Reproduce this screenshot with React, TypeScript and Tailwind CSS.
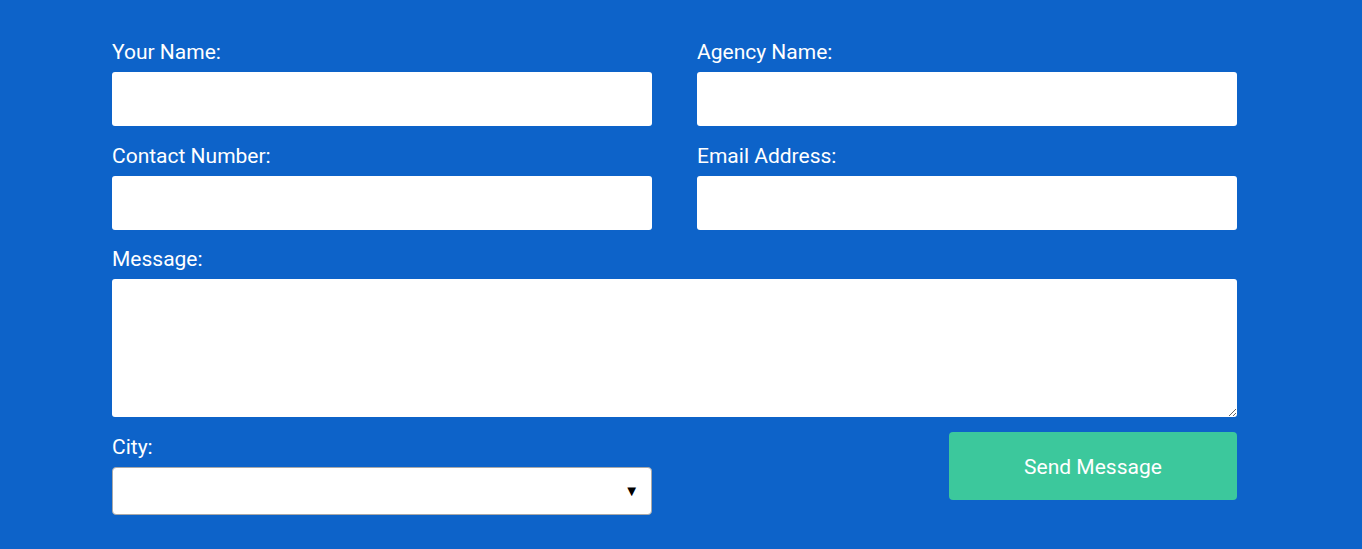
import React from "react";

function Field({ label }: { label: string }) {
  return (
    <div className="flex flex-col">
      <label className="h-[25px] leading-[27px] mb-2 text-[21px] text-white">{label}</label>
      <input type="text" className="h-[54px] w-full rounded-[3px] bg-white border-0 outline-none px-3 text-base" />
    </div>
  );
}

export default function App() {
  return (
    <div className="min-h-screen w-full bg-[#0d63c9] font-['Roboto',sans-serif]">
      <form className="ml-[112px] w-[1125px] pt-[39px] flex flex-col" onSubmit={(e) => e.preventDefault()}>
        <div className="grid grid-cols-2 gap-x-[45px]">
          <Field label="Your Name:" />
          <Field label="Agency Name:" />
        </div>
        <div className="grid grid-cols-2 gap-x-[45px] mt-[17px]">
          <Field label="Contact Number:" />
          <Field label="Email Address:" />
        </div>
        <div className="flex flex-col mt-[16px]">
          <label className="h-[25px] leading-[27px] mb-2 text-[21px] text-white">Message:</label>
          <textarea className="h-[138px] w-full rounded-[3px] bg-white border-0 outline-none p-3 text-base block" />
        </div>
        <div className="flex justify-between items-start mt-[15px]">
          <div className="flex flex-col w-[540px] pt-[2px]">
            <label className="h-[25px] leading-[27px] mb-2 text-[21px] text-white">City:</label>
            <div className="relative">
              <select className="appearance-none h-[48px] w-full rounded-[4px] bg-white border border-[#a9a9a9] outline-none px-3 text-base">
                <option value=""></option>
              </select>
              <span className="pointer-events-none absolute right-[13px] top-1/2 -translate-y-1/2 text-[15px] text-black leading-none">▼</span>
            </div>
          </div>
          <button type="submit" className="w-[288px] h-[68px] pt-1 rounded-[4px] bg-[#3cc89c] text-white text-[21px]">
            Send Message
          </button>
        </div>
      </form>
    </div>
  );
}
